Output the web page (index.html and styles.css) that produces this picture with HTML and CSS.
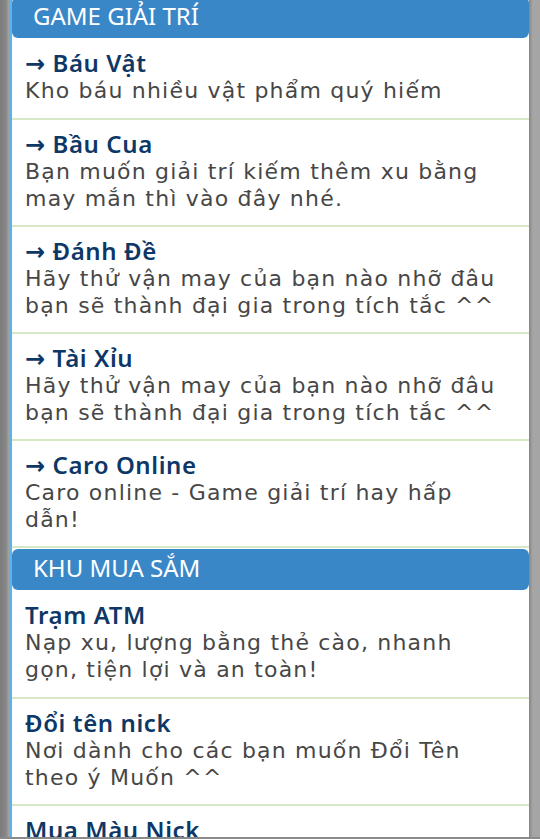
FILE: index.html
```html
<!DOCTYPE html>
<html lang="vi">
<head>
<meta charset="utf-8">
<link rel="stylesheet" href="styles.css">
</head>
<body>
<div class="panel">
  <div class="section-head first">GAME GIẢI TRÍ</div>
  <div class="item">
    <div class="title">→ Báu Vật</div>
    <div class="desc">Kho báu nhiều vật phẩm quý hiếm</div>
  </div>
  <div class="item">
    <div class="title">→ Bầu Cua</div>
    <div class="desc">Bạn muốn giải trí kiếm thêm xu bằng may mắn thì vào đây nhé.</div>
  </div>
  <div class="item">
    <div class="title">→ Đánh Đề</div>
    <div class="desc">Hãy thử vận may của bạn nào nhỡ đâu bạn sẽ thành đại gia trong tích tắc ^^</div>
  </div>
  <div class="item">
    <div class="title">→ Tài Xỉu</div>
    <div class="desc">Hãy thử vận may của bạn nào nhỡ đâu bạn sẽ thành đại gia trong tích tắc ^^</div>
  </div>
  <div class="item">
    <div class="title">→ Caro Online</div>
    <div class="desc">Caro online - Game giải trí hay hấp dẫn!</div>
  </div>
  <div class="section-head">KHU MUA SẮM</div>
  <div class="item">
    <div class="title">Trạm ATM</div>
    <div class="desc">Nạp xu, lượng bằng thẻ cào, nhanh gọn, tiện lợi và an toàn!</div>
  </div>
  <div class="item">
    <div class="title">Đổi tên nick</div>
    <div class="desc">Nơi dành cho các bạn muốn Đổi Tên theo ý Muốn ^^</div>
  </div>
  <div class="item">
    <div class="title">Mua Màu Nick</div>
  </div>
</div>
<div class="navline"></div>
</body>
</html>
```
FILE: styles.css
```css
html, body {
  margin: 0;
  padding: 0;
  height: 100%;
  overflow: hidden;
}
body {
  background: linear-gradient(to right, #7c7c7c 0, #878787 6px, #a5a5a5 9px, #a5a5a5 100%);
  font-family: "Noto Sans", "DejaVu Sans", sans-serif;
}
.panel {
  margin: -3px 11px 0 9px;
  border-left: 3px solid #5cb3ec;
  background: #fff;
  box-shadow: 2px 0 2px rgba(0,0,0,0.18);
  min-height: 900px;
}
.section-head {
  background: #3a87c8;
  color: #fff;
  border-radius: 6px;
  font-size: 24px;
  line-height: 28px;
  padding: 5px 21px 8px;
  margin-top: 1px;
}
.section-head.first {
  margin-top: 0;
}
.item {
  padding: 10px 24px 13px 13px;
  border-bottom: 2px solid #d6e8c4;
}
.section-head + .item {
  padding-top: 11px;
  padding-bottom: 14px;
}
.title {
  color: #0d3766;
  font-weight: 600;
  font-size: 24px;
  line-height: 28px;
  letter-spacing: 0.6px;
}
.desc {
  color: #474747;
  font-family: "DejaVu Sans", "Noto Sans", sans-serif;
  font-size: 22px;
  line-height: 27px;
  letter-spacing: 1.2px;
}
.navline {
  position: fixed;
  left: 0;
  right: 0;
  bottom: 0;
  height: 2px;
  background: #8a8a8a;
}
```
